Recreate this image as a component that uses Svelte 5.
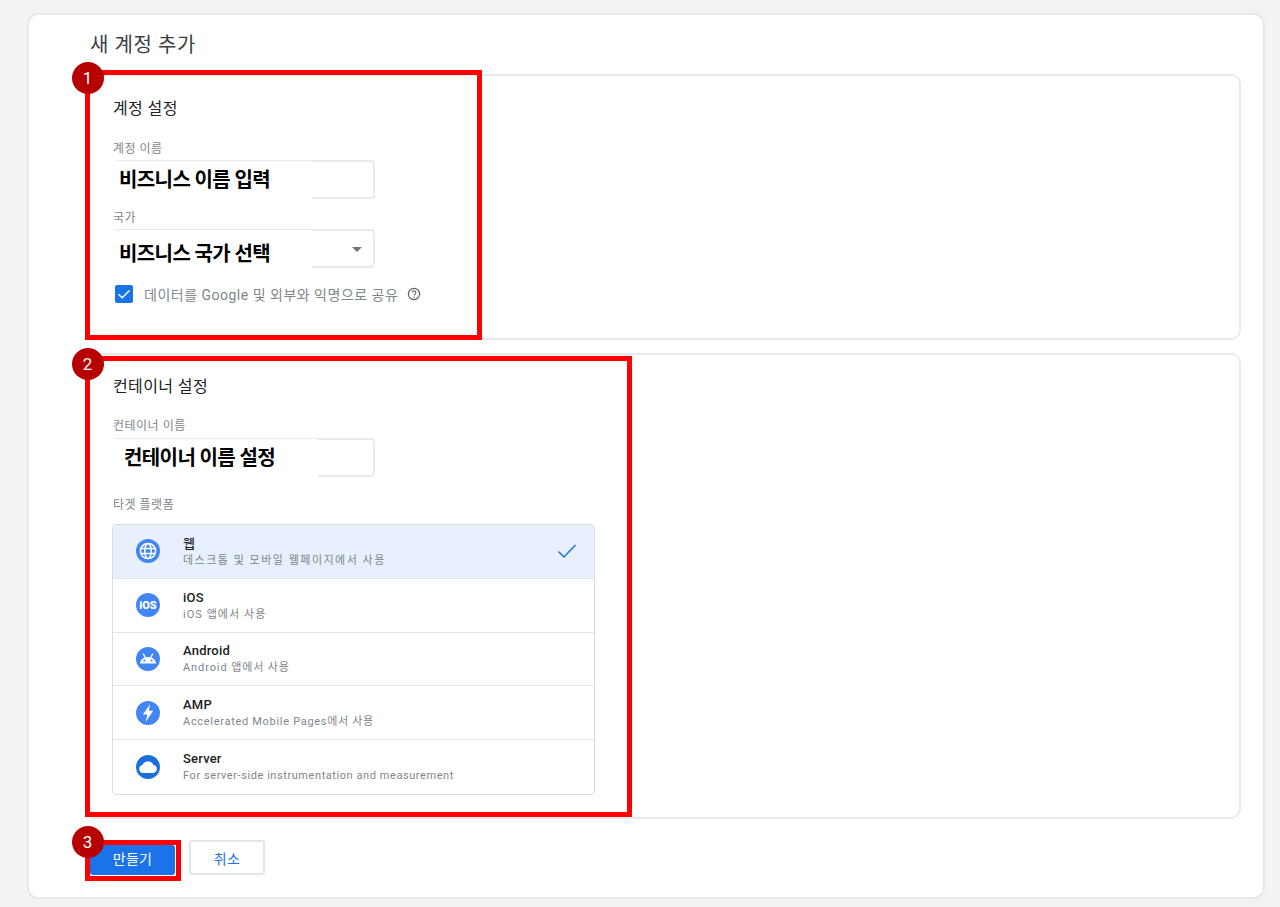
<script>
  const platforms = [
    { id: 'web', name: '웹', desc: '데스크톱 및 모바일 웹페이지에서 사용', track: '1.5px', selected: true },
    { id: 'ios', name: 'iOS', desc: 'iOS 앱에서 사용', track: '1.05px' },
    { id: 'android', name: 'Android', desc: 'Android 앱에서 사용', track: '0.9px' },
    { id: 'amp', name: 'AMP', desc: 'Accelerated Mobile Pages에서 사용', track: '0.7px' },
    { id: 'server', name: 'Server', desc: 'For server-side instrumentation and measurement', track: '0.57px' }
  ];
</script>

<div class="page">
  <div class="card">
    <h1>새 계정 추가</h1>

    <section class="panel account">
      <h2>계정 설정</h2>
      <div class="label">계정 이름</div>
      <div class="field">
        <span class="patch">비즈니스 이름 입력</span>
      </div>
      <div class="label country">국가</div>
      <div class="field select">
        <span class="patch low">비즈니스 국가 선택</span>
        <span class="caret"></span>
      </div>
      <div class="share">
        <span class="checkbox">
          <svg viewBox="0 0 18 18" width="18" height="18">
            <path d="M3.5 9.2l3.7 3.6 7.3-7.4" fill="none" stroke="#fff" stroke-width="1.4" />
          </svg>
        </span>
        <span class="share-text">데이터를 Google 및 외부와 익명으로 공유</span>
        <svg class="help" viewBox="0 0 14 14" width="14" height="14">
          <circle cx="7" cy="7" r="5.6" fill="none" stroke="#5f6368" stroke-width="1.2" />
          <path d="M5.2 5.6a1.8 1.8 0 1 1 2.8 1.5c-.6.4-1 .7-1 1.5" fill="none" stroke="#5f6368" stroke-width="1.1" />
          <circle cx="7" cy="10.2" r=".7" fill="#5f6368" />
        </svg>
      </div>
    </section>

    <section class="panel container">
      <h2>컨테이너 설정</h2>
      <div class="label name">컨테이너 이름</div>
      <div class="field">
        <span class="patch wide">컨테이너 이름 설정</span>
      </div>
      <div class="label target">타겟 플랫폼</div>
      <div class="list">
        {#each platforms as p}
          <div class="row" class:selected={p.selected}>
            <span class="icon">
              {#if p.id === 'web'}
                <svg viewBox="0 0 24 24" width="24" height="24">
                  <circle cx="12" cy="12" r="12" fill="#4285f4" />
                  <g fill="none" stroke="#fff" stroke-width="1.5">
                    <circle cx="12" cy="12" r="7.6" />
                    <ellipse cx="12" cy="12" rx="3.2" ry="7.6" />
                    <path d="M4.8 9.5h14.4M4.8 14.500h14.400" />
                  </g>
                </svg>
              {:else if p.id === 'ios'}
                <svg viewBox="0 0 24 24" width="24" height="24">
                  <circle cx="12" cy="12" r="12" fill="#4285f4" />
                  <text class="ios" x="12" y="16" text-anchor="middle">iOS</text>
                </svg>
              {:else if p.id === 'android'}
                <svg viewBox="0 0 24 24" width="24" height="24">
                  <circle cx="12" cy="12" r="12" fill="#4285f4" />
                  <path d="M4 16.500c.2-3.800 3.400-6.600 8-6.600s7.800 2.800 8 6.600z" fill="#fff" />
                  <path d="M7.200 6.600l2.200 4M16.800 6.600l-2.200 4" stroke="#fff" stroke-width="1.200" />
                  <circle cx="8.400" cy="13.500" r="1.100" fill="#4285f4" />
                  <circle cx="15.600" cy="13.500" r="1.100" fill="#4285f4" />
                </svg>
              {:else if p.id === 'amp'}
                <svg viewBox="0 0 24 24" width="24" height="24">
                  <circle cx="12" cy="12" r="12" fill="#4285f4" />
                  <path d="M14 3.200L6.800 13.600h4.400l-1.400 7.400 7.400-11.200h-4.400z" fill="#fff" />
                </svg>
              {:else}
                <svg viewBox="0 0 24 24" width="24" height="24">
                  <circle cx="12" cy="12" r="12" fill="#1a6fdc" />
                  <path d="M7 18a4 4 0 0 1-.6-7.900A6 6 0 0 1 17.500 9.900 4.100 4.100 0 0 1 17.200 18z" fill="#fff" />
                </svg>
              {/if}
            </span>
            <div class="row-text">
              <div class="row-name">{p.name}</div>
              <div class="row-desc" style:letter-spacing={p.track}>{p.desc}</div>
            </div>
            {#if p.selected}
              <svg class="tick" viewBox="0 0 20 20" width="20" height="20">
                <path d="M1.500 10.500l5.500 5.500L18.500 4" fill="none" stroke="#1a73e8" stroke-width="1.500" />
              </svg>
            {/if}
          </div>
        {/each}
      </div>
    </section>

    <div class="actions">
      <button class="primary">만들기</button>
      <button class="cancel">취소</button>
    </div>

    <!-- annotations drawn on top of the screenshot -->
    <div class="mark mark1"><span class="badge">1</span></div>
    <div class="mark mark2"><span class="badge">2</span></div>
    <div class="mark mark3"><span class="badge">3</span></div>
  </div>
</div>

<style>
  :global(body) {
    margin: 0;
    background: #f1f3f4;
  }

  .page {
    height: 907px;
    box-sizing: border-box;
    padding: 13px 15px 8px 27px;
    font-family: Roboto, "Noto Sans CJK KR", sans-serif;
    color: #202124;
    overflow: hidden;
  }

  .card {
    position: relative;
    box-sizing: border-box;
    height: 886px;
    background: #fff;
    border: 2px solid #e6e7ea;
    border-radius: 11px;
    padding: 16px 22px 0 57px;
  }

  h1 {
    margin: 0 0 14px 4px;
    height: 29px;
    font-size: 20px;
    line-height: 29px;
    font-weight: 400;
    letter-spacing: 0.6px;
    color: #3c4043;
  }

  .panel {
    box-sizing: border-box;
    background: #fff;
    border: 2px solid #e8eaed;
    border-radius: 10px;
    padding: 22px 0 0 25px;
  }

  .account {
    height: 266px;
    margin-bottom: 13px;
  }

  .container {
    height: 466px;
    padding-top: 21px;
  }

  h2 {
    margin: 0 0 20px;
    font-size: 16px;
    line-height: 22px;
    font-weight: 400;
    letter-spacing: 0.4px;
    color: #202124;
  }

  .label {
    font-size: 12px;
    line-height: 18px;
    letter-spacing: 0.5px;
    color: #80868b;
    margin-bottom: 2px;
  }

  .country {
    margin-top: 10px;
  }

  .name {
    line-height: 16px;
    margin-bottom: 4px;
  }

  .target {
    margin-top: 19px;
    margin-bottom: 10px;
  }

  .field {
    position: relative;
    box-sizing: border-box;
    width: 262px;
    height: 39px;
    border: 2px solid #e8eaed;
    border-radius: 4px;
  }

  .patch {
    position: absolute;
    left: -2px;
    top: -1px;
    bottom: -2px;
    width: 193px;
    padding-left: 6px;
    background: #fff;
    font-size: 20px;
    font-weight: 700;
    line-height: 38px;
    letter-spacing: -0.6px;
    color: #000;
    white-space: nowrap;
  }

  .patch.low {
    line-height: 48px;
  }

  .patch.wide {
    width: 194px;
    padding-left: 11px;
    line-height: 38px;
  }

  .caret {
    position: absolute;
    right: 11px;
    top: 16px;
    border-left: 5px solid transparent;
    border-right: 5px solid transparent;
    border-top: 5px solid #757575;
  }

  .share {
    display: flex;
    align-items: center;
    margin: 16px 0 0 2px;
    height: 20px;
  }

  .checkbox {
    display: block;
    width: 18px;
    height: 18px;
    background: #1a73e8;
    border-radius: 2px;
    margin-right: 11px;
  }

  .share-text {
    font-size: 14px;
    color: #80868b;
    letter-spacing: 0.5px;
    margin-right: 9px;
  }

  .list {
    box-sizing: border-box;
    width: 483px;
    margin-left: -1px;
    border: 1px solid #dadce0;
    border-radius: 4px;
    overflow: hidden;
  }

  .row {
    display: flex;
    align-items: center;
    height: 53.75px;
    box-sizing: border-box;
    padding: 0 17px 0 23px;
    border-bottom: 1.5px solid #e4e5e8;
  }

  .row:last-child {
    border-bottom: 0;
  }

  .row.selected {
    background: #e8f0fe;
  }

  .icon {
    display: block;
    width: 24px;
    height: 24px;
    margin-right: 23px;
  }

  .ios {
    font-family: Roboto, sans-serif;
    font-size: 11px;
    font-weight: 900;
    fill: #fff;
  }

  .row-text {
    flex: 1;
  }

  .row-name {
    font-size: 13px;
    line-height: 17px;
    font-weight: 500;
    letter-spacing: 0.2px;
    color: #202124;
  }

  .row-desc {
    font-size: 11px;
    line-height: 15px;
    margin-top: 1px;
    color: #80868b;
  }

  .actions {
    display: flex;
    align-items: flex-end;
    gap: 14px;
    margin: 21px 0 0 4px;
    height: 35px;
  }

  button {
    font-family: inherit;
    font-size: 14px;
    letter-spacing: 0.3px;
    border-radius: 3px;
    padding: 0;
  }

  .primary {
    width: 85px;
    height: 30px;
    padding-bottom: 4px;
    background: #1a73e8;
    color: #fff;
    border: 0;
  }

  .cancel {
    width: 76px;
    height: 35px;
    background: #fff;
    color: #1a73e8;
    border: 2px solid #e4e5e8;
  }

  .mark {
    position: absolute;
    box-sizing: border-box;
    border: 5.5px solid #ff0000;
  }

  .mark1 {
    left: 56px;
    top: 55px;
    width: 397px;
    height: 270px;
  }

  .mark2 {
    left: 56px;
    top: 341px;
    width: 547px;
    height: 461px;
  }

  .mark3 {
    left: 56px;
    top: 825px;
    width: 96px;
    height: 41px;
  }

  .badge {
    position: absolute;
    left: -18.5px;
    top: -13.5px;
    width: 32px;
    height: 32px;
    border-radius: 50%;
    background: #b70000;
    color: #fff;
    font-size: 17px;
    line-height: 32px;
    text-align: center;
  }

  .mark3 .badge {
    top: -19px;
  }
</style>
